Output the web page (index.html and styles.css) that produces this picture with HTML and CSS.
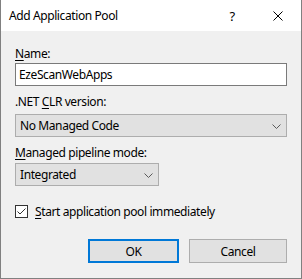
FILE: index.html
```html
<!DOCTYPE html>
<html lang="en">
<head>
  <meta charset="UTF-8">
  <title>Add Application Pool</title>
  <link rel="stylesheet" href="styles.css">
</head>
<body>
  <div class="window">
    <div class="titlebar">
      <span class="title">Add Application Pool</span>
      <span class="caption-btn help">?</span>
      <span class="caption-btn close">
        <svg width="10" height="10" viewBox="0 0 10 10">
          <path d="M0.5 0.5 L9.5 9.5 M9.5 0.5 L0.5 9.5" stroke="#000" stroke-width="1" fill="none"/>
        </svg>
      </span>
    </div>

    <div class="content">
      <label class="label label-name"><u>N</u>ame:</label>
      <div class="textbox">EzeScanWebApps</div>

      <label class="label label-clr">.NET <u>C</u>LR version:</label>
      <div class="combo combo-wide">
        <span>No Managed Code</span>
        <svg class="chevron" width="9" height="5" viewBox="0 0 9 5">
          <path d="M0.5 0.5 L4.5 4.5 L8.5 0.5" stroke="#5a5a5a" stroke-width="1" fill="none"/>
        </svg>
      </div>

      <label class="label label-mode"><u>M</u>anaged pipeline mode:</label>
      <div class="combo combo-narrow">
        <span>Integrated</span>
        <svg class="chevron" width="9" height="5" viewBox="0 0 9 5">
          <path d="M0.5 0.5 L4.5 4.5 L8.5 0.5" stroke="#5a5a5a" stroke-width="1" fill="none"/>
        </svg>
      </div>

      <div class="check-row">
        <span class="checkbox">
          <svg width="11" height="11" viewBox="0 0 11 11">
            <path d="M1.5 5.5 L4 8 L9.5 2.5" stroke="#333" stroke-width="1" fill="none"/>
          </svg>
        </span>
        <span><u>S</u>tart application pool immediately</span>
      </div>

      <div class="buttons">
        <button class="btn btn-ok">OK</button>
        <button class="btn btn-cancel">Cancel</button>
      </div>
    </div>
  </div>
</body>
</html>
```

FILE: styles.css
```css
/* Reset */
* {
  margin: 0;
  padding: 0;
  box-sizing: border-box;
}

body {
  font-family: 'Noto Sans', 'Open Sans', Arial, sans-serif;
  font-size: 12px;
  letter-spacing: -0.4px;
  color: #000;
  background: #fff;
}

u {
  text-decoration-thickness: 1px;
  text-underline-offset: 2px;
}

/* Dialog frame */
.window {
  width: 302px;
  height: 279px;
  border: 1px solid #808080;
  border-top: none;
  display: flex;
  flex-direction: column;
  background: #f0f0f0;
}

/* Title bar */
.titlebar {
  height: 31px;
  display: flex;
  align-items: center;
  background: #fff;
}

.title {
  flex: 1;
  padding-left: 8px;
  font-size: 12px;
  line-height: 31px;
}

.caption-btn {
  width: 46px;
  height: 31px;
  display: flex;
  align-items: center;
  justify-content: center;
}

.help {
  font-size: 13px;
}

/* Form */
.content {
  flex: 1;
  padding: 0 14px;
  display: flex;
  flex-direction: column;
}

.label {
  display: block;
  line-height: 15px;
}

.label-name {
  margin-top: 15px;
}

.label-clr {
  margin-top: 8px;
}

.label-mode {
  margin-top: 8px;
}

.textbox {
  margin-top: 2px;
  height: 23px;
  border: 1px solid #7a7a7a;
  background: #fff;
  padding-left: 3px;
  line-height: 21px;
}

.combo {
  height: 23px;
  border: 1px solid #adadad;
  background: #e1e1e1;
  padding: 0 5px 0 4px;
  display: flex;
  align-items: center;
  justify-content: space-between;
}

.combo-wide {
  margin-top: 5px;
}

.combo-narrow {
  margin-top: 3px;
  width: 144px;
}

.chevron {
  margin-top: 1px;
}

/* Checkbox */
.check-row {
  margin-top: 19px;
  display: flex;
  align-items: center;
  gap: 7px;
  line-height: 13px;
}

.checkbox {
  width: 13px;
  height: 13px;
  border: 1px solid #333;
  background: #fff;
  display: flex;
  align-items: center;
  justify-content: center;
}

/* Buttons */
.buttons {
  margin-top: 21px;
  display: flex;
  justify-content: flex-end;
  gap: 10px;
}

.btn {
  height: 24px;
  font-family: inherit;
  font-size: 12px;
  letter-spacing: inherit;
  color: #000;
  background: #e1e1e1;
  border: 1px solid #adadad;
}

.btn-ok {
  width: 91px;
  border: 2px solid #0078d7;
}

.btn-cancel {
  width: 98px;
}
```
